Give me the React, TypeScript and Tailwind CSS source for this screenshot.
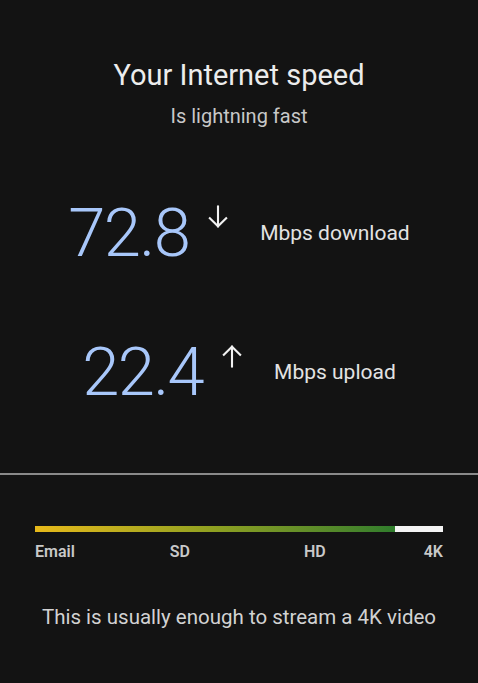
import React from 'react';

const Arrow = ({ up }: { up?: boolean }) => (
  <svg width="28" height="28" viewBox="0 0 24 24" fill="none" stroke="#f1f1f1" strokeWidth="1.8" strokeLinecap="square" className={up ? '' : 'rotate-180'}>
    <path d="M12 21V4" />
    <path d="M5 11l7-7 7 7" />
  </svg>
);

const SpeedRow = ({ value, label, up }: { value: string; label: string; up?: boolean }) => (
  <div className="flex items-start justify-center">
    <div className="text-[67px] leading-none font-light text-[#a8c7fa] tracking-tight">{value}</div>
    <div className="ml-[15px] mt-[3px]">
      <Arrow up={up} />
    </div>
    <div className="ml-[28px] mt-[18px] text-[21px] text-[#e3e3e3]">{label}</div>
  </div>
);

export default function App() {
  return (
    <div className="w-[478px] h-[683px] bg-[#131313] flex flex-col font-['Roboto',sans-serif]">
      <div className="pt-[57px] flex flex-col items-center">
        <h1 className="text-[29px] leading-[36px] text-[#ececec]">Your Internet speed</h1>
        <p className="mt-[10px] text-[20px] leading-[26px] text-[#c8c8c8]">Is lightning fast</p>
      </div>

      <div className="mt-[71px] flex flex-col gap-[72px]">
        <SpeedRow value="72.8" label="Mbps download" />
        <SpeedRow value="22.4" label="Mbps upload" up />
      </div>

      <div className="mt-[67px] h-[2px] bg-[#8a8a8a]" />

      <div className="mt-[51px] px-[35px]">
        <div className="flex h-[6px]">
          <div className="flex-1 bg-gradient-to-r from-[#e7b91a] via-[#8ea021] to-[#2f7d2c]" />
          <div className="w-[48px] bg-[#f4f4f4]" />
        </div>
        <div className="mt-[8px] flex text-[16px] font-semibold text-[#c9c9c9]">
          <span>Email</span>
          <span className="ml-[95px]">SD</span>
          <span className="ml-[114px]">HD</span>
          <span className="ml-auto">4K</span>
        </div>
      </div>

      <p className="mt-[38px] text-center text-[20.5px] text-[#d2d2d2]">This is usually enough to stream a 4K video</p>
    </div>
  );
}
